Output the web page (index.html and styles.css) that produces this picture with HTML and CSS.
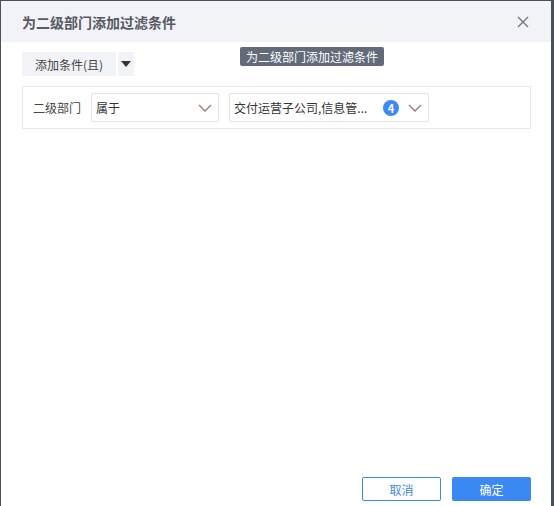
FILE: index.html
```html
<!DOCTYPE html>
<html lang="zh">
<head>
<meta charset="utf-8">
<link rel="stylesheet" href="styles.css">
</head>
<body>
<div class="dialog">
  <div class="header">
    <span class="title">为二级部门添加过滤条件</span>
    <svg class="close" width="12" height="12" viewBox="0 0 12 12"><path d="M1 1L11 11M11 1L1 11" stroke="#6b7280" stroke-width="1.3" fill="none"/></svg>
  </div>
  <div class="body">
    <div class="toolbar">
      <button class="add-btn">添加条件(且)</button>
      <button class="drop-btn"><svg width="10" height="6" viewBox="0 0 10 6"><path d="M0 0H10L5 6Z" fill="#333"/></svg></button>
      <div class="tooltip">为二级部门添加过滤条件</div>
    </div>
    <div class="filter-row">
      <span class="label">二级部门</span>
      <div class="select op">
        <span class="value">属于</span>
        <svg class="arrow" width="14" height="8" viewBox="0 0 14 8"><path d="M1 1L7 7L13 1" stroke="#9a7a70" stroke-width="1.3" fill="none"/></svg>
      </div>
      <div class="select vals">
        <span class="value">交付运营子公司,信息管...</span>
        <span class="badge">4</span>
        <svg class="arrow" width="14" height="8" viewBox="0 0 14 8"><path d="M1 1L7 7L13 1" stroke="#9a7a70" stroke-width="1.3" fill="none"/></svg>
      </div>
    </div>
  </div>
  <div class="footer">
    <button class="btn cancel">取消</button>
    <button class="btn ok">确定</button>
  </div>
</div>
</body>
</html>
```
FILE: styles.css
```css
html, body {
  margin: 0;
  padding: 0;
  height: 100%;
  overflow: hidden;
}
body {
  background: #4a4f5c;
  font-family: "Noto Sans CJK SC", "Noto Sans", sans-serif;
  font-size: 12px;
  color: #333;
}
.dialog {
  margin: 1px 0 0 1px;
  width: 550px;
  height: 505px;
  background: #fff;
  display: flex;
  flex-direction: column;
}
.header {
  height: 41px;
  background: #f2f3f7;
  display: flex;
  align-items: center;
  justify-content: space-between;
  padding: 0 22px 0 21px;
  flex-shrink: 0;
}
.title {
  font-size: 14px;
  font-weight: bold;
  color: #555a63;
}
.close {
  display: block;
}
.body {
  flex: 1;
  padding: 10px 20px 0 21px;
}
.toolbar {
  display: flex;
  align-items: center;
  height: 24px;
  position: relative;
}
button {
  font-family: inherit;
  font-size: 12px;
  border: none;
  padding: 0;
  cursor: pointer;
}
.add-btn {
  height: 24px;
  width: 94px;
  background: #f2f3f6;
  color: #444;
}
.drop-btn {
  height: 24px;
  width: 16px;
  margin-left: 2px;
  background: #f2f3f6;
  display: flex;
  align-items: center;
  justify-content: center;
}
.drop-btn svg { display: block; }
.tooltip {
  position: absolute;
  left: 218px;
  top: -5px;
  height: 19px;
  padding: 0 6px;
  background: #636b7a;
  color: #fff;
  font-size: 12px;
  line-height: 19px;
  border-radius: 2px;
  white-space: nowrap;
}
.filter-row {
  margin-top: 10px;
  height: 41px;
  border: 1px solid #e8e9ec;
  display: flex;
  align-items: center;
  padding: 0 10px;
  gap: 10px;
}
.label {
  color: #444;
  width: 48px;
  white-space: nowrap;
  flex-shrink: 0;
}
.select {
  height: 29px;
  border: 1px solid #e3e4e8;
  border-radius: 2px;
  box-sizing: border-box;
  display: flex;
  align-items: center;
  padding: 0 6px 0 4px;
  flex-shrink: 0;
}
.op {
  width: 128px;
}
.vals {
  width: 200px;
}
.value {
  flex: 1;
  color: #333;
  white-space: nowrap;
}
.badge {
  width: 16px;
  height: 16px;
  border-radius: 50%;
  background: #3d8af7;
  color: #fff;
  font-size: 11px;
  font-weight: bold;
  display: flex;
  align-items: center;
  justify-content: center;
  margin-right: 9px;
}
.arrow {
  display: block;
}
.footer {
  display: flex;
  justify-content: flex-end;
  gap: 11px;
  padding: 0 20px 5px 0;
  flex-shrink: 0;
}
.btn {
  width: 79px;
  height: 24px;
  border-radius: 2px;
  box-sizing: border-box;
}
.cancel {
  background: #fff;
  border: 1px solid #3a89f3;
  color: #3a89f3;
}
.ok {
  background: #3a89f3;
  color: #fff;
}
```
